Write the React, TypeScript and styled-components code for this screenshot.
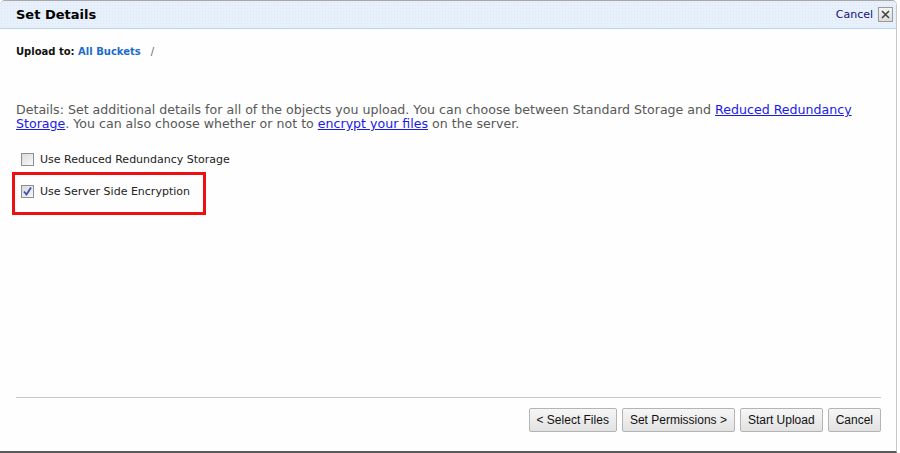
import React from "react";
import styled, { createGlobalStyle } from "styled-components";

const GlobalStyle = createGlobalStyle`
  html, body {
    margin: 0;
    padding: 0;
    background: #ffffff;
  }
  body {
    font-family: "DejaVu Sans", Verdana, sans-serif;
  }
`;

const App: React.FC = () => {
  return (
    <>
      <GlobalStyle />
      <Dialog>
        <Header>
          <Title>Set Details</Title>
          <HeaderCancel>
            <CancelLink>Cancel</CancelLink>
            <CloseBox aria-label="close">
              <svg width="9" height="9" viewBox="0 0 9 9">
                <path d="M1 1 L8 8 M8 1 L1 8" stroke="#444" strokeWidth="1.6" />
              </svg>
            </CloseBox>
          </HeaderCancel>
        </Header>

        <Body>
          <UploadTo>
            Upload to: <BucketLink>All Buckets</BucketLink>
            <Slash>/</Slash>
          </UploadTo>

          <Details>
            Details: Set additional details for all of the objects you upload.
            You can choose between Standard Storage and{" "}
            <TextLink href="#">Reduced Redundancy Storage</TextLink>. You can
            also choose whether or not to{" "}
            <TextLink href="#">encrypt your files</TextLink> on the server.
          </Details>

          <Options>
            <OptionRow>
              <CheckBox />
              <OptionLabel>Use Reduced Redundancy Storage</OptionLabel>
            </OptionRow>
            <Highlight>
              <OptionRow>
                <CheckBox checked>
                  <svg width="11" height="11" viewBox="0 0 11 11">
                    <path
                      d="M2 5.5 L4.5 8.5 L9 1.5"
                      fill="none"
                      stroke="#3a52a8"
                      strokeWidth="1.8"
                    />
                  </svg>
                </CheckBox>
                <OptionLabel>Use Server Side Encryption</OptionLabel>
              </OptionRow>
            </Highlight>
          </Options>
        </Body>

        <Footer>
          <Button>&lt; Select Files</Button>
          <Button>Set Permissions &gt;</Button>
          <Button>Start Upload</Button>
          <Button>Cancel</Button>
        </Footer>
      </Dialog>
    </>
  );
};

export default App;

const Dialog = styled.div`
  box-sizing: border-box;
  width: 897px;
  height: 453px;
  display: flex;
  flex-direction: column;
  background: #fdfefd;
  border-top: 1px solid #a8a8a8;
  border-right: 1px solid #c8c8c8;
  border-bottom: 2px solid #5a5a5a;
  border-radius: 5px 5px 0 0;
`;

const Header = styled.div`
  height: 27px;
  display: flex;
  align-items: center;
  justify-content: space-between;
  padding: 0 3px 0 16px;
  background-color: #e8f1fb;
  background-image: radial-gradient(#dbe7f5 0.6px, transparent 0.7px);
  background-size: 3px 3px;
  border-bottom: 1px solid #b8d5ee;
  border-radius: 5px 5px 0 0;
`;

const Title = styled.span`
  font-weight: bold;
  font-size: 13px;
  color: #000;
`;

const HeaderCancel = styled.div`
  display: flex;
  align-items: center;
  gap: 5px;
`;

const CancelLink = styled.span`
  font-size: 11px;
  color: #10107a;
`;

const CloseBox = styled.span`
  box-sizing: border-box;
  width: 15px;
  height: 15px;
  display: flex;
  align-items: center;
  justify-content: center;
  border: 1px solid #9a9a9a;
  background: linear-gradient(#f4f4f4, #dcdcdc);
`;

const Body = styled.div`
  flex: 1;
  padding: 17px 16px 0;
`;

const UploadTo = styled.div`
  font-size: 10px;
  font-weight: bold;
  color: #111;
`;

const BucketLink = styled.span`
  color: #1c6ccc;
`;

const Slash = styled.span`
  font-weight: normal;
  color: #666;
  margin-left: 10px;
`;

const Details = styled.p`
  margin: 46px 0 0;
  font-size: 12.6px;
  line-height: 14px;
  color: #585858;
`;

const TextLink = styled.a`
  color: #1a1ae8;
  text-decoration: underline;
`;

const Options = styled.div`
  margin-top: 18px;
  display: flex;
  flex-direction: column;
  margin-left: -4px;
`;

const OptionRow = styled.div`
  display: flex;
  align-items: center;
  gap: 6px;
  padding-left: 9px;
  height: 20px;
`;

const Highlight = styled.div`
  box-sizing: border-box;
  margin-top: 3px;
  width: 194px;
  height: 43px;
  border: 3px solid #ee0f12;
  padding-top: 6px;

  ${OptionRow} {
    padding-left: 6px;
  }
`;

const CheckBox = styled.span<{ checked?: boolean }>`
  box-sizing: border-box;
  width: 13px;
  height: 13px;
  display: flex;
  align-items: center;
  justify-content: center;
  border: 1px solid #8e8f8f;
  background: ${(p) =>
    p.checked
      ? "linear-gradient(135deg, #d8d8dc, #f6f6f6)"
      : "linear-gradient(135deg, #dcdcdc, #f8f8f8)"};
`;

const OptionLabel = styled.span`
  font-size: 11px;
  color: #222;
`;

const Footer = styled.div`
  margin: 0 15px 0 16px;
  border-top: 1px solid #c8c8c8;
  padding: 10px 0 19px;
  display: flex;
  justify-content: flex-end;
  gap: 5px;
`;

const Button = styled.button`
  height: 24px;
  padding: 0 7px;
  font-family: "Liberation Sans", Arial, sans-serif;
  font-size: 12px;
  color: #111;
  border: 1px solid #b4b4b4;
  border-radius: 2px;
  background: linear-gradient(#f6f6f6, #e2e2e2);
`;
